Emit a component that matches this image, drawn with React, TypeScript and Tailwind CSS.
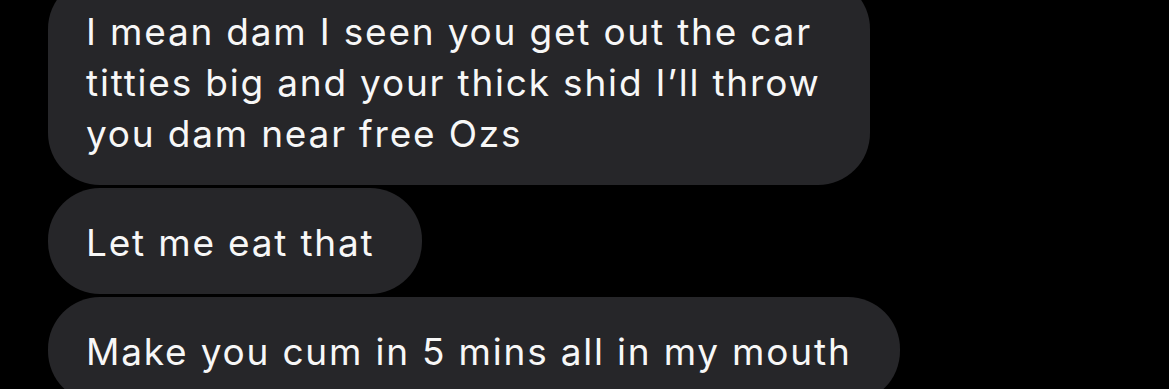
import React from "react";

const messages = [
  {
    id: 1,
    lines: ["I mean dam I seen you get out the car", "titties big and your thick shid I\u2019ll throw", "you dam near free Ozs"],
    className: "w-[822px] -mt-[23px]",
  },
  { id: 2, lines: ["Let me eat that"], className: "" },
  { id: 3, lines: ["Make you cum in 5 mins all in my mouth"], className: "" },
];

export default function App() {
  return (
    <div className="h-[389px] w-[1169px] overflow-hidden bg-black">
      <div className="flex flex-col items-start gap-[3px] pl-[48px]">
        {messages.map((m) => (
          <div
            key={m.id}
            className={`rounded-[52px] bg-[#262629] pl-[38px] pr-[48px] pt-[29px] pb-[26px] text-[37px] leading-[51px] tracking-[1.8px] text-[#f7f7f7] font-['Inter',sans-serif] ${m.className}`}
          >
            {m.lines.map((line, i) => (
              <div key={i} className="whitespace-nowrap">
                {line}
              </div>
            ))}
          </div>
        ))}
      </div>
    </div>
  );
}
